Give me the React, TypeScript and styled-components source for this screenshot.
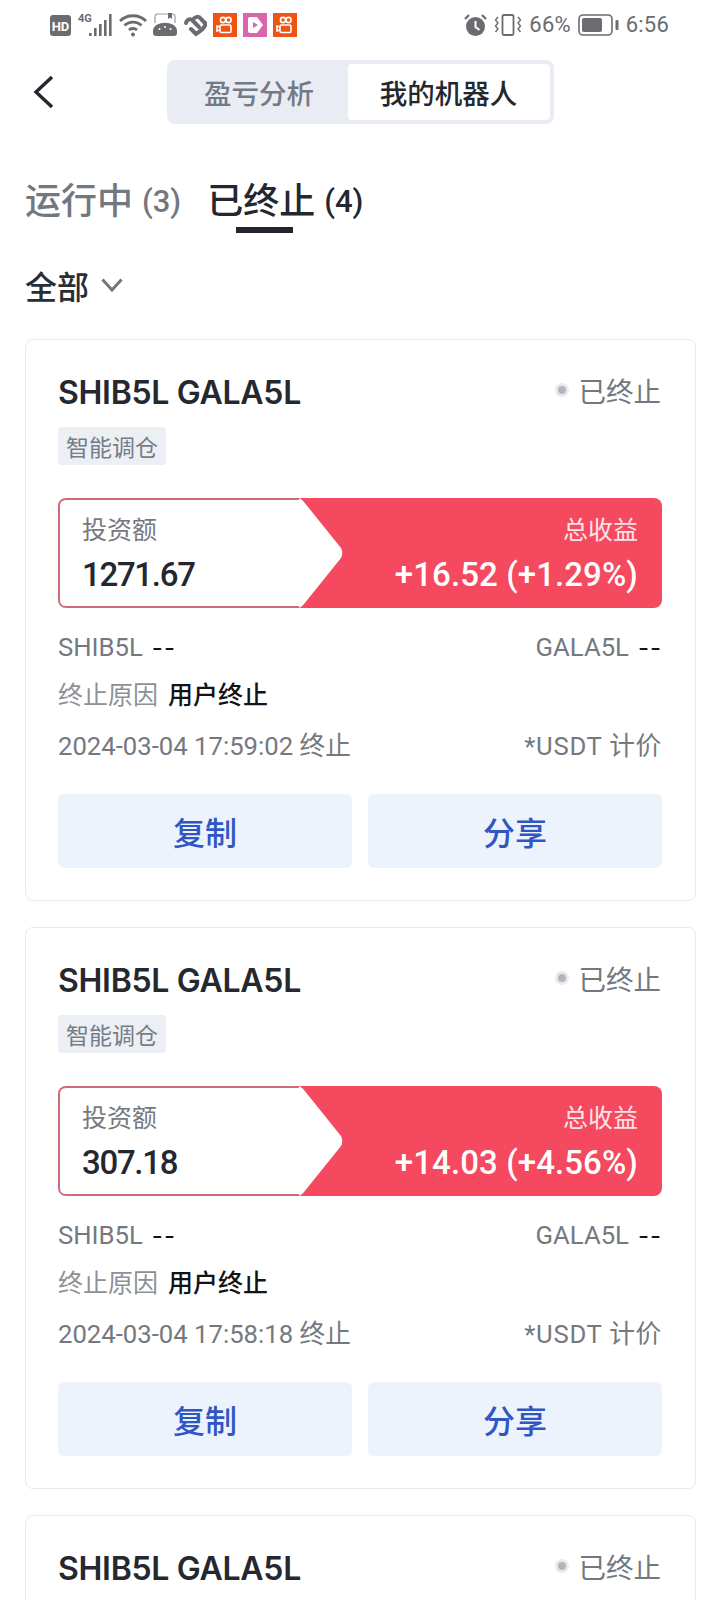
import React from "react";
import styled, { createGlobalStyle } from "styled-components";

const GlobalStyle = createGlobalStyle`
  html, body {
    margin: 0;
    padding: 0;
    background: #fff;
    height: 1600px;
    overflow: hidden;
  }
  * { box-sizing: border-box; }
  body {
    font-family: "Roboto", "Noto Sans CJK SC", sans-serif;
    color: #24272e;
  }
`;

const Page = styled.div`
  width: 720px;
  height: 1600px;
  overflow: hidden;
`;

const StatusBar = styled.div`
  height: 50px;
  padding: 0 51px 0 50px;
  display: flex;
  justify-content: space-between;
  align-items: center;
  color: #6a6c70;
`;

const StatusGroup = styled.div<{ $gap: number }>`
  display: flex;
  align-items: center;
  gap: ${(p) => p.$gap}px;
`;

const StatusText = styled.span`
  font-size: 22px;
  line-height: 24px;
  letter-spacing: 0.2px;
`;

const AppTile = styled.div<{ $bg: string }>`
  width: 24px;
  height: 24px;
  background: ${(p) => p.$bg};
  display: flex;
  align-items: center;
  justify-content: center;
`;

const Header = styled.div`
  height: 84px;
  padding-top: 10px;
  display: flex;
  justify-content: center;
  position: relative;
`;

const BackButton = styled.div`
  position: absolute;
  left: 32px;
  top: 25px;
  width: 24px;
  height: 34px;
`;

const Segmented = styled.div`
  width: 387px;
  height: 64px;
  padding: 4px;
  background: #e9ecf2;
  border-radius: 8px;
  display: flex;
`;

const Segment = styled.div<{ $active?: boolean }>`
  flex: ${(p) => (p.$active ? "0 0 202px" : "1")};
  display: flex;
  align-items: center;
  justify-content: center;
  border-radius: 4px;
  font-size: 27.5px;
  font-weight: 500;
  color: ${(p) => (p.$active ? "#24272e" : "#737987")};
  background: ${(p) => (p.$active ? "#fff" : "transparent")};
`;

const Tabs = styled.div`
  margin-top: 40px;
  padding-left: 25px;
  height: 64px;
  display: flex;
  gap: 26px;
`;

const Tab = styled.div<{ $active?: boolean }>`
  position: relative;
  height: 56px;
  display: flex;
  align-items: center;
  gap: 9px;
  color: ${(p) => (p.$active ? "#24272e" : "#737880")};
  ${(p) =>
    p.$active &&
    `&::after {
      content: "";
      position: absolute;
      left: 29px;
      bottom: -3px;
      width: 57px;
      height: 6px;
      background: #23252e;
    }`}
`;

const TabLabel = styled.span`
  font-size: 36px;
  font-weight: 500;
  line-height: 56px;
`;

const TabCount = styled.span`
  font-size: 31px;
  font-weight: 500;
  line-height: 56px;
`;

const Filter = styled.div`
  margin-top: 25px;
  padding-left: 25px;
  height: 44px;
  display: flex;
  align-items: center;
  gap: 12px;
  font-size: 32px;
  font-weight: 500;
  color: #2a2d34;
`;

const CardList = styled.div`
  margin-top: 32px;
  padding: 0 24.5px;
  display: flex;
  flex-direction: column;
  gap: 26px;
`;

const Card = styled.div`
  height: 562px;
  padding: 31px 32.5px 0;
  border: 1.5px solid #e8eaed;
  border-radius: 8px;
  background: #fff;
  flex-shrink: 0;
`;

const CardTop = styled.div`
  height: 42px;
  display: flex;
  align-items: center;
  justify-content: space-between;
`;

const Title = styled.div`
  font-family: "Inter", "Noto Sans CJK SC", sans-serif;
  font-size: 32px;
  font-weight: 600;
  letter-spacing: -0.3px;
  color: #25282e;
`;

const Status = styled.div`
  display: flex;
  align-items: center;
  gap: 10px;
  margin-right: 1px;
  padding-bottom: 4px;
  font-size: 27.5px;
  color: #737880;
`;

const StatusDot = styled.span`
  width: 14px;
  height: 14px;
  border-radius: 50%;
  background: #b2b6ba;
  border: 3px solid #e8ecf1;
`;

const Tag = styled.div`
  margin-top: 14px;
  width: 108px;
  height: 38px;
  border-radius: 4px;
  background: #eceff4;
  display: flex;
  align-items: center;
  justify-content: center;
  font-size: 23px;
  color: #767c88;
`;

const Banner = styled.div`
  position: relative;
  margin-top: 33px;
  height: 110px;
  display: flex;
  justify-content: space-between;
  background: #f4495f;
  border-radius: 8px;
  overflow: hidden;
`;

const BannerNotch = styled.svg`
  position: absolute;
  left: 0;
  top: 0;
`;

const BannerSide = styled.div<{ $right?: boolean }>`
  position: relative;
  padding: ${(p) => (p.$right ? "17px 24px 0 0" : "17px 0 0 24px")};
  display: flex;
  flex-direction: column;
  align-items: ${(p) => (p.$right ? "flex-end" : "flex-start")};
  color: ${(p) => (p.$right ? "#fff" : "#24272e")};
`;

const BannerLabel = styled.div<{ $right?: boolean }>`
  font-size: 25px;
  line-height: 32px;
  color: ${(p) => (p.$right ? "#fde4e7" : "#75797f")};
`;

const BannerValue = styled.div<{ $right?: boolean }>`
  margin-top: 6px;
  font-size: 33px;
  line-height: 44px;
  font-weight: 500;
  letter-spacing: ${(p) => (p.$right ? "0.1px" : "-1.3px")};
`;

const InfoRow = styled.div<{ $gap: number; $small?: boolean }>`
  margin-top: ${(p) => p.$gap}px;
  height: 34px;
  display: flex;
  align-items: center;
  justify-content: space-between;
  font-size: ${(p) => (p.$small ? 25 : 25.7)}px;
  color: #75797f;
`;

const InfoValue = styled.span`
  margin-left: 10px;
  color: #111317;
  font-weight: 500;
`;

const Dashes = styled.span`
  margin-left: 9px;
  font-family: "Inter", sans-serif;
  font-size: 24px;
  letter-spacing: 1px;
  color: #111317;
`;

const Reason = styled.span`
  color: #8d9196;
`;

const Unit = styled.span`
  letter-spacing: 0.7px;
`;

const Actions = styled.div`
  margin-top: 34px;
  display: flex;
  gap: 16px;
`;

const ActionButton = styled.div`
  flex: 1;
  height: 74px;
  border-radius: 6px;
  background: #edf3fd;
  display: flex;
  align-items: center;
  justify-content: center;
  font-size: 32px;
  font-weight: 500;
  color: #2f56c3;
`;

const Kuaishou = () => (
  <svg width="18" height="18" viewBox="0 0 18 18" fill="none" stroke="#fff" strokeWidth="1.6">
    <circle cx="7" cy="4" r="2.6" />
    <circle cx="12.5" cy="4" r="2.6" />
    <rect x="4" y="9" width="11" height="7.5" rx="1.5" />
    <path d="M4 11 L1 10 V15 L4 14" />
  </svg>
);

function LeftStatus() {
  return (
    <StatusGroup $gap={6}>
      <svg width="21" height="21" viewBox="0 0 21 21">
        <rect width="21" height="21" rx="3" fill="#6a6c70" />
        <text x="10.5" y="15.5" textAnchor="middle" fontSize="13" fontWeight="700" fontFamily="Roboto" fill="#fff">HD</text>
      </svg>
      <svg width="36" height="24" viewBox="0 0 36 24" fill="#6a6c70">
        <text x="1" y="9" fontSize="11" fontWeight="700" fontFamily="Roboto">4G</text>
        <rect x="12" y="20" width="2.6" height="3" />
        <rect x="17" y="15" width="2.6" height="8" />
        <rect x="22" y="11" width="2.6" height="12" />
        <rect x="27" y="7" width="2.6" height="16" />
        <rect x="32" y="1" width="2.6" height="22" />
      </svg>
      <svg width="28" height="24" viewBox="0 0 28 24" fill="none" stroke="#6a6c70" strokeWidth="2.8">
        <path d="M1 8 C8 1 20 1 27 8" />
        <path d="M5.5 12.5 C10 8 18 8 22.5 12.5" />
        <path d="M10 17 C12 15 16 15 18 17" />
        <circle cx="14" cy="21.5" r="2" fill="#6a6c70" stroke="none" />
      </svg>
      <svg width="24" height="24" viewBox="0 0 24 24">
        <path d="M2 10 V4 Q2 1 5 1 H19 Q22 1 22 4 V10" fill="none" stroke="#9a9c9f" strokeWidth="1.2" />
        <path d="M15 0 H19 V6 L17 4.5 L15 6 Z" fill="#6a6c70" />
        <path d="M0 18 C0 7 24 7 24 18 V20 Q24 23 21 23 H3 Q0 23 0 20 Z" fill="#6a6c70" />
        <circle cx="6.5" cy="16" r="1" fill="#fff" />
        <circle cx="12" cy="14" r="1" fill="#fff" />
        <circle cx="17.5" cy="16" r="1" fill="#fff" />
      </svg>
      <svg width="24" height="24" viewBox="0 0 24 24" fill="none" stroke="#6a6c70" strokeWidth="4" strokeLinecap="round">
        <path d="M3 10 C4 6 8 5 10 8 L16 14" />
        <path d="M10 7 C12 3 16 3 18 6 L22 10 C23 12 21 16 13 21 L8 16" />
      </svg>
      <AppTile $bg="#ef5413"><Kuaishou /></AppTile>
      <AppTile $bg="#d966a8">
        <svg width="18" height="18" viewBox="0 0 18 18">
          <path d="M2 3 Q2 1 4 1 H11 L17 9 L11 17 H4 Q2 17 2 15 Z" fill="#fff" />
          <path d="M7 6 L12 9 L7 12 Z" fill="#d966a8" />
        </svg>
      </AppTile>
      <AppTile $bg="#ef5413"><Kuaishou /></AppTile>
    </StatusGroup>
  );
}

function RightStatus() {
  return (
    <StatusGroup $gap={7}>
      <svg width="23" height="24" viewBox="0 0 23 24">
        <circle cx="11.5" cy="13.5" r="9.5" fill="#6a6c70" />
        <path d="M11.5 8 V14 L15.5 17" fill="none" stroke="#fff" strokeWidth="2" />
        <path d="M1 6 L5 2 M22 6 L18 2" stroke="#6a6c70" strokeWidth="2.2" />
      </svg>
      <svg width="28" height="24" viewBox="0 0 28 24" fill="none" stroke="#6a6c70" strokeWidth="1.8">
        <rect x="8.5" y="2" width="11" height="20" rx="1.5" />
        <path d="M4 4 L1.5 7 L4 10 L1.5 13 L4 16 L1.5 19" strokeWidth="1.4" />
        <path d="M24 4 L26.5 7 L24 10 L26.5 13 L24 16 L26.5 19" strokeWidth="1.4" />
      </svg>
      <StatusText>66%</StatusText>
      <svg width="41" height="24" viewBox="0 0 41 24">
        <rect x="1" y="2" width="33" height="20" rx="4" fill="none" stroke="#6a6c70" strokeWidth="1.6" />
        <rect x="4" y="5" width="20" height="14" rx="2" fill="#6a6c70" />
        <rect x="37.5" y="7" width="3" height="10" rx="1" fill="#6a6c70" />
      </svg>
      <StatusText>6:56</StatusText>
    </StatusGroup>
  );
}

interface BotType {
  invest: string;
  profit: string;
  time: string;
}

const bots: BotType[] = [
  { invest: "1271.67", profit: "+16.52 (+1.29%)", time: "2024-03-04 17:59:02 终止" },
  { invest: "307.18", profit: "+14.03 (+4.56%)", time: "2024-03-04 17:58:18 终止" },
  { invest: "", profit: "", time: "" },
];

function BotCard({ bot }: { bot: BotType }) {
  return (
    <Card>
      <CardTop>
        <Title>SHIB5L GALA5L</Title>
        <Status>
          <StatusDot />
          已终止
        </Status>
      </CardTop>
      <Tag>智能调仓</Tag>
      <Banner>
        <BannerNotch width="300" height="110" viewBox="0 0 300 110">
          <path
            d="M8 0 H239 Q243 0 246 4 L283 50 Q285.5 55 283 60 L246 106 Q243 110 239 110 H8 Q0 110 0 102 V8 Q0 0 8 0 Z"
            fill="#fff"
          />
          <path
            d="M241 1 H8 Q1 1 1 8 V102 Q1 109 8 109 H241"
            fill="none"
            stroke="#cf6a7c"
            strokeWidth="2"
          />
        </BannerNotch>
        <BannerSide>
          <BannerLabel>投资额</BannerLabel>
          <BannerValue>{bot.invest}</BannerValue>
        </BannerSide>
        <BannerSide $right>
          <BannerLabel $right>总收益</BannerLabel>
          <BannerValue $right>{bot.profit}</BannerValue>
        </BannerSide>
      </Banner>
      <InfoRow $gap={22}>
        <span>SHIB5L<Dashes>--</Dashes></span>
        <span>GALA5L<Dashes>--</Dashes></span>
      </InfoRow>
      <InfoRow $gap={12} $small>
        <span><Reason>终止原因</Reason><InfoValue>用户终止</InfoValue></span>
      </InfoRow>
      <InfoRow $gap={16}>
        <span>{bot.time}</span>
        <Unit>*USDT 计价</Unit>
      </InfoRow>
      <Actions>
        <ActionButton>复制</ActionButton>
        <ActionButton>分享</ActionButton>
      </Actions>
    </Card>
  );
}

export default function App() {
  return (
    <Page>
      <GlobalStyle />
      <StatusBar>
        <LeftStatus />
        <RightStatus />
      </StatusBar>
      <Header>
        <BackButton>
          <svg width="24" height="34" viewBox="0 0 24 34" fill="none" stroke="#24272e" strokeWidth="3.4">
            <path d="M20 2 L4 17 L20 32" />
          </svg>
        </BackButton>
        <Segmented>
          <Segment>盈亏分析</Segment>
          <Segment $active>我的机器人</Segment>
        </Segmented>
      </Header>
      <Tabs>
        <Tab>
          <TabLabel>运行中</TabLabel>
          <TabCount>(3)</TabCount>
        </Tab>
        <Tab $active>
          <TabLabel>已终止</TabLabel>
          <TabCount>(4)</TabCount>
        </Tab>
      </Tabs>
      <Filter>
        全部
        <svg width="22" height="14" viewBox="0 0 22 14" fill="none" stroke="#73777d" strokeWidth="3">
          <path d="M1.5 1.5 L11 12 L20.5 1.5" />
        </svg>
      </Filter>
      <CardList>
        {bots.map((bot, i) => (
          <BotCard bot={bot} key={i} />
        ))}
      </CardList>
    </Page>
  );
}
